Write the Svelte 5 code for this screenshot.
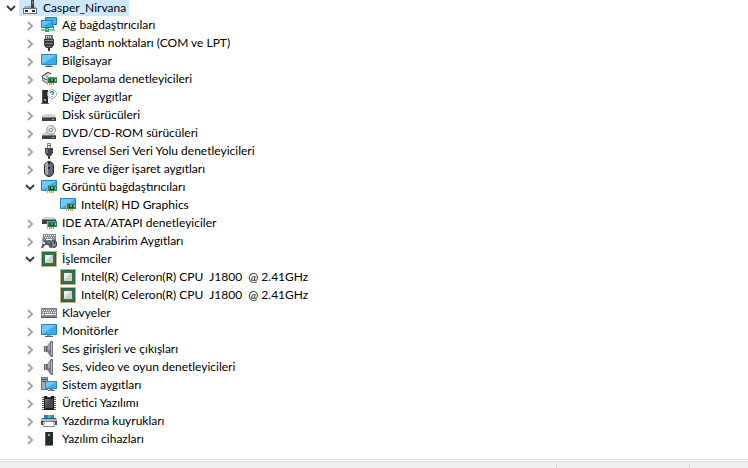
<script lang="ts">
	type Device = { name: string; icon: string; open?: boolean; leaf?: boolean; children?: Device[] };

	let selected = $state('Casper_Nirvana');

	let root: Device = $state({
		name: 'Casper_Nirvana',
		icon: 'root',
		open: true,
		children: [
			{ name: 'Ağ bağdaştırıcıları', icon: 'network' },
			{ name: 'Bağlantı noktaları (COM ve LPT)', icon: 'port' },
			{ name: 'Bilgisayar', icon: 'monitor' },
			{ name: 'Depolama denetleyicileri', icon: 'storage' },
			{ name: 'Diğer aygıtlar', icon: 'unknown' },
			{ name: 'Disk sürücüleri', icon: 'disk' },
			{ name: 'DVD/CD-ROM sürücüleri', icon: 'dvd' },
			{ name: 'Evrensel Seri Veri Yolu denetleyicileri', icon: 'usb' },
			{ name: 'Fare ve diğer işaret aygıtları', icon: 'mouse' },
			{
				name: 'Görüntü bağdaştırıcıları',
				icon: 'display',
				open: true,
				children: [{ name: 'Intel(R) HD Graphics', icon: 'display', leaf: true }]
			},
			{ name: 'IDE ATA/ATAPI denetleyiciler', icon: 'ide' },
			{ name: 'İnsan Arabirim Aygıtları', icon: 'hid' },
			{
				name: 'İşlemciler',
				icon: 'cpu',
				open: true,
				children: [
					{ name: 'Intel(R) Celeron(R) CPU  J1800  @ 2.41GHz', icon: 'cpu', leaf: true },
					{ name: 'Intel(R) Celeron(R) CPU  J1800  @ 2.41GHz', icon: 'cpu', leaf: true }
				]
			},
			{ name: 'Klavyeler', icon: 'keyboard' },
			{ name: 'Monitörler', icon: 'monitor' },
			{ name: 'Ses girişleri ve çıkışları', icon: 'speaker' },
			{ name: 'Ses, video ve oyun denetleyicileri', icon: 'speaker' },
			{ name: 'Sistem aygıtları', icon: 'system' },
			{ name: 'Üretici Yazılımı', icon: 'firmware' },
			{ name: 'Yazdırma kuyrukları', icon: 'printer' },
			{ name: 'Yazılım cihazları', icon: 'software' }
		]
	});
</script>

{#snippet card()}
	<path d="M6 6h1v8H6z" fill="#a8a8a8" />
	<path d="M7 6h9v6H7z" fill="#2f7d56" />
	<path d="M7 6h9v1H7z" fill="#58a27c" />
	<path d="M9 8h4v3H9z" fill="#173f2b" />
	<path d="M10 8h2v2h-2z" fill="#6fae8c" />
	<path d="M14 8h1v2h-1z" fill="#9fd0b5" />
	<path d="M8 12h5v2H8z" fill="#e9a320" />
	<path d="M9 12h1v2H9zM11 12h1v2h-1z" fill="#fbd77a" />
{/snippet}

{#snippet drive()}
	<path d="M3 7h10l2 3H1z" fill="#d4d4d4" />
	<path d="M1 10h14v4H1z" fill="#3f4244" />
	<path d="M1 10h14v1H1z" fill="#75787a" />
	<path d="M11 12h2v1h-2z" fill="#4be04b" />
{/snippet}

{#snippet screen()}
	<path d="M.5 1.5h15v10H.5z" fill="#6ccbfa" stroke="#2b83b7" />
	<path d="M1 11L15 2v9z" fill="#3fa9ee" />
{/snippet}

{#snippet icon(name: string)}
	<svg class="icon" viewBox="0 0 16 16" aria-hidden="true">
		{#if name === 'root'}
			<path d="M9 0h3v8H9z" fill="#3f4245" />
			<path d="M10 1h1v3h-1z" fill="#8b9094" />
			<path d="M3 6h6v2h3V6h1l2 3H1z" fill="#a4a9ac" />
			<path d="M1 8h14v6H1z" fill="#707477" />
			<path d="M2 9h12v4H2z" fill="#f2f3f3" />
			<path d="M3 10h3v2H3zM10 10h3v2h-3z" fill="#303336" />
		{:else if name === 'network'}
			<path d="M4.5 .5h11v7h-11z" fill="#45b5f2" stroke="#2580b5" />
			<path d="M.5 3.500h11v7H.5z" fill="#62c6f9" stroke="#2784ba" />
			<path d="M1 10l10-6v6z" fill="#36a9ea" />
			<path d="M5 11h2v1H5zM12 9h1v3h-1z" fill="#68747b" />
			<path d="M0 12h14v2H0z" fill="#7fce91" />
			<path d="M4 11h4v4H4z" fill="#34aa52" />
			<path d="M5 12h2v1H5z" fill="#9be0aa" />
		{:else if name === 'port'}
			<path d="M4 0h8v4H4z" fill="#6c6c6c" />
			<path d="M5 1h1v2H5zM7 1h1v2H7zM9 1h1v2H9z" fill="#d4d4d4" />
			<path d="M3 4h10v6l-2 3H5l-2-3z" fill="#3b3b3b" />
			<path d="M4 5h8v1H4zM4 8h8v1H4z" fill="#858585" />
			<path d="M5 11h6v1H5z" fill="#6c6c6c" />
			<path d="M7 13h2v3H7z" fill="#333" />
		{:else if name === 'monitor'}
			{@render screen()}
			<path d="M6 12h4v1H6z" fill="#9ca5aa" />
			<path d="M4 13h8v1H4z" fill="#57636b" />
		{:else if name === 'storage'}
			<path d="M1.500 5L7 1.500l3 1.500M7 4L5 5.500l3 1.500 2-1M1.500 5v2L6 9" fill="none" stroke="#4c4c4c" stroke-width="1.300" />
			<path d="M3 5l4-2 2 1-4 2z" fill="#d0d0d0" />
			<path d="M1 8l5 3v2l-5-3z" fill="#8c8c8c" />
			{@render card()}
		{:else if name === 'unknown'}
			<path d="M1 1h6v13H1z" fill="#292929" />
			<path d="M1 1h1v13H1z" fill="#585858" />
			<path d="M0 14h8v1H0z" fill="#626262" />
			<path d="M3 10h2v2H3z" fill="#54df50" />
			<circle cx="11" cy="5" r="4.500" fill="#fff" stroke="#9cabb4" />
			<path d="M9.500 4c0-2 3-2 3 0 0 1-1.500 1-1.500 2" fill="none" stroke="#2384c6" stroke-width="1.300" />
			<path d="M10.500 7h1v1h-1z" fill="#2384c6" />
		{:else if name === 'disk'}
			{@render drive()}
		{:else if name === 'dvd'}
			{@render drive()}
			<circle cx="10" cy="5" r="4.500" fill="#d6d6d6" stroke="#a2a2a2" />
			<path d="M10 5L7 2l3-1zM10 5l3 3 1-3z" fill="#f8f8f8" />
			<circle cx="10" cy="5" r="1.500" fill="#fff" stroke="#8d8d8d" />
		{:else if name === 'usb'}
			<path d="M6.500 .5h3v5h-3z" fill="#eee" stroke="#858585" />
			<path d="M7 2h2v1H7z" fill="#666" />
			<path d="M4 5h8v5l-2 3H6l-2-3z" fill="#454545" />
			<path d="M5 6h2v4H5z" fill="#777" />
			<path d="M7 13h2v3H7z" fill="#444" />
		{:else if name === 'mouse'}
			<rect x="3.500" y=".5" width="9" height="15" rx="4.500" fill="#626a73" stroke="#24282d" />
			<path d="M4 5c0-2 1-4 3-4v13c-2 0-3-1-3-3z" fill="#a0a8b1" />
			<path d="M7 1h2v7H7z" fill="#22262b" />
			<path d="M7.500 3h1v3h-1z" fill="#8cb9d6" />
		{:else if name === 'display'}
			{@render screen()}
			{@render card()}
		{:else if name === 'ide'}
			<path d="M3 2h10l2 2H1z" fill="#d7d7d7" />
			<path d="M1 4h14v5H1z" fill="#3f4244" />
			<path d="M1 4h14v1H1z" fill="#85888a" />
			{@render card()}
		{:else if name === 'hid'}
			<path d="M2 1h13v7H1z" fill="#858b91" />
			<path d="M3 2h1v1H3zM5 2h1v1H5zM7 2h1v1H7zM9 2h1v1H9zM11 2h1v1h-1zM13 2h1v1h-1zM4 4h1v1H4zM6 4h1v1H6zM8 4h1v1H8zM10 4h1v1h-1zM12 4h1v1h-1zM5 6h6v1H5z" fill="#fff" />
			<path d="M2 8l2-1 2 1 2-1 2 1 1 7H9l-2-3H4l-2 3H0z" fill="#596068" />
			<path d="M2 9h2v2H2z" fill="#e3e6e8" />
			<path d="M7 9h2v1H7z" fill="#4aa3e0" />
			<rect x="10.500" y="7.500" width="5" height="7" rx="2.500" fill="#858c94" stroke="#3d434a" />
			<path d="M13 8h1v3h-1z" fill="#2c3036" />
		{:else if name === 'cpu'}
			<path d="M0 0h16v16H0z" fill="#e6dcc0" />
			<rect x=".5" y=".5" width="15" height="15" fill="none" stroke="#a98b3c" stroke-dasharray="1 1" />
			<path d="M1 1h14v14H1z" fill="#286044" />
			<path d="M2 2h12v12H2z" fill="#35734f" />
			<path d="M4 4h8v8H4z" fill="#cbd0cd" />
			<path d="M4 4h7l-7 7z" fill="#eceeed" />
		{:else if name === 'keyboard'}
			<path d="M0 3h16v10H0z" fill="#7d848a" />
			<path d="M0 12h16v1H0z" fill="#50565b" />
			<path d="M1 4h14v7H1z" fill="#8d9398" />
			<path d="M1 5h1v1H1zM3 5h1v1H3zM5 5h1v1H5zM7 5h1v1H7zM9 5h1v1H9zM11 5h1v1h-1zM13 5h1v1h-1zM2 7h1v1H2zM4 7h1v1H4zM6 7h1v1H6zM8 7h1v1H8zM10 7h1v1h-1zM12 7h1v1h-1zM14 7h1v1h-1zM1 9h2v1H1zM4 9h8v1H4zM13 9h2v1h-2z" fill="#fff" />
		{:else if name === 'speaker'}
			<path d="M3 5h3v6H3z" fill="#565c61" />
			<path d="M4 5h1v6H4z" fill="#a4a9ad" />
			<path d="M6 5l4-5v16l-4-5z" fill="#7c8288" />
			<path d="M7 5l3-4v8H7z" fill="#a7abaf" />
			<path d="M9 1l1-1h2v16h-2l-1-1z" fill="#74797e" />
			<path d="M10 2h1v12h-1z" fill="#b4b7ba" />
		{:else if name === 'system'}
			<path d="M0 0h7v13H0z" fill="#6d7276" />
			<path d="M1 1h5v11H1z" fill="#a7acb0" />
			<path d="M1 2h5v1H1zM1 4h5v1H1z" fill="#44494d" />
			<path d="M1 10h2v1H1z" fill="#4be04b" />
			<path d="M4.500 4.500h11v7h-11z" fill="#6ccbfa" stroke="#2b83b7" />
			<path d="M5 11l10-6v6z" fill="#3fa9ee" />
			<path d="M9 12h3v1H9zM7 13h7v1H7z" fill="#68747b" />
		{:else if name === 'firmware'}
			<path d="M1 2h14v1H1zM1 4h14v1H1zM1 6h14v1H1zM1 8h14v1H1zM1 10h14v1H1zM1 12h14v1H1zM1 14h14v1H1z" fill="#555" />
			<path d="M3 1h3l1 2h2l1-2h3v14H3z" fill="#1d1d1d" />
			<path d="M4 4h8v9H4z" fill="#4a4a4a" />
			<path d="M4 4h5l-5 7z" fill="#646464" />
		{:else if name === 'printer'}
			<path d="M3 2h10v4H3z" fill="#1689d1" />
			<path d="M7 2h3v3H7z" fill="#33c2e1" />
			<path d="M11 2h2v3h-2z" fill="#31aa55" />
			<path d="M1 5h14l1 2v5h-2V9H2v3H0V7z" fill="#484c50" />
			<path d="M0 6h16v2H0z" fill="#b6babd" />
			<path d="M3.500 8.500h9l1 5h-11z" fill="#fff" stroke="#858a8e" />
		{:else if name === 'software'}
			<path d="M4 1h8v13H4z" fill="#292929" />
			<path d="M4 1h1v13H4z" fill="#626262" />
			<path d="M7 3h2v2H7z" fill="#43dc43" />
			<path d="M4 14h8v1H4z" fill="#858585" />
		{/if}
	</svg>
{/snippet}

{#snippet node(device: Device, level: number)}
	<li role="treeitem" aria-expanded={device.leaf ? undefined : !!device.open} aria-selected={selected === device.name}>
		<div class="row" class:top={level === 0}>
			{#if device.leaf}
				<span class="toggle"></span>
			{:else}
				<button class="toggle" class:open={device.open} aria-label={device.name} onclick={() => (device.open = !device.open)}>
					<svg viewBox="0 0 10 10" aria-hidden="true">
						<path d={device.open ? 'M1 3l4 4 4-4' : 'M3 2l4 4-4 4'} />
					</svg>
				</button>
			{/if}
			<button class="label" class:selected={selected === device.name} onclick={() => (selected = device.name)}>
				{@render icon(device.icon)}
				<span>{device.name}</span>
			</button>
		</div>
		{#if device.open && device.children}
			<ul role="group">
				{#each device.children as child}
					{@render node(child, level + 1)}
				{/each}
			</ul>
		{/if}
	</li>
{/snippet}

<div class="window">
	<main>
		<ul class="tree" role="tree">
			{@render node(root, 0)}
		</ul>
	</main>
	<footer>
		<span class="message"></span>
		<span class="pane"></span>
		<span class="rest"></span>
	</footer>
</div>

<style>
	:global(body) {
		background: #fff;
	}
	.window {
		display: flex;
		flex-direction: column;
		height: 100vh;
		overflow: hidden;
		font-family: 'Segoe UI', Lato, 'Open Sans', sans-serif;
		font-size: 12px;
		color: #000;
	}
	main {
		flex: 1;
		min-height: 0;
		overflow: hidden;
	}
	ul {
		list-style: none;
		margin: 0;
		padding: 0 0 0 19px;
	}
	.tree {
		padding-left: 3px;
	}
	.row {
		display: flex;
		align-items: center;
		height: 18px;
	}
	.row.top {
		height: 16px;
	}
	button {
		border: 0;
		padding: 0;
		background: none;
		font: inherit;
		color: inherit;
	}
	.toggle {
		display: flex;
		align-items: center;
		justify-content: center;
		width: 16px;
		height: 16px;
		flex: none;
	}
	.toggle svg {
		width: 10px;
		height: 10px;
		overflow: visible;
		fill: none;
		stroke: #a6a6a6;
		stroke-width: 2;
	}
	.toggle.open svg {
		stroke: #404040;
	}
	.label {
		display: flex;
		align-items: center;
		gap: 5px;
		height: 100%;
		padding: 0 3px;
		line-height: 16px;
		white-space: pre;
	}
	.label.selected {
		background: #cce8ff;
	}
	.icon {
		width: 16px;
		height: 16px;
		flex: none;
	}
	footer {
		display: flex;
		height: 5px;
		padding-top: 1px;
		border-top: 1px solid #d7d7d7;
		background: #f0f0f0;
		box-shadow: 0 -1px #fff, 0 -2px #dfdfdf;
	}
	.message {
		flex: 556;
		border-right: 1px solid #d7d7d7;
	}
	.pane {
		flex: 132;
		border-right: 1px solid #d7d7d7;
	}
	.rest {
		flex: 58;
	}
</style>
